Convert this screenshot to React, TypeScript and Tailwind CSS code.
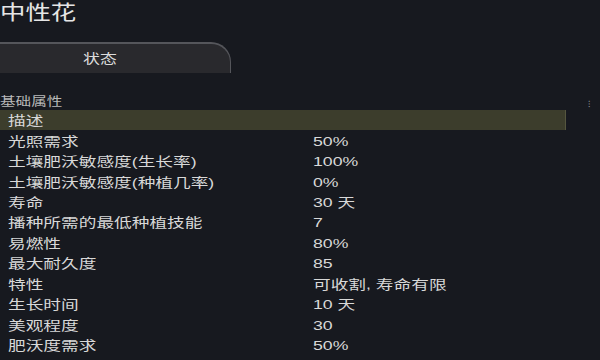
import React from 'react';

const rows: [string, string][] = [
  ['描述', ''],
  ['光照需求', '50%'],
  ['土壤肥沃敏感度(生长率)', '100%'],
  ['土壤肥沃敏感度(种植几率)', '0%'],
  ['寿命', '30 天'],
  ['播种所需的最低种植技能', '7'],
  ['易燃性', '80%'],
  ['最大耐久度', '85'],
  ['特性', '可收割, 寿命有限'],
  ['生长时间', '10 天'],
  ['美观程度', '30'],
  ['肥沃度需求', '50%'],
];

const font = { fontFamily: '"Liberation Sans", "Noto Sans CJK SC", sans-serif' };

export default function App() {
  return (
    <div className="w-[600px] h-[360px] overflow-hidden bg-[#17191f] text-[#d4d4d4]" style={font}>
      {/* title */}
      <div className="h-[40px] pt-[1px]">
        <span className="inline-block origin-left scale-x-[1.27] text-[20px] leading-[24px] text-[#e6e6e6]">中性花</span>
      </div>

      {/* tab */}
      <div className="w-[231px] h-[31px] mt-[2px] bg-[#29292d] border-t-2 border-r border-[#55565b] rounded-tr-[20px] flex items-center pl-[83px]">
        <span className="inline-block origin-left scale-x-[1.3] text-[13px] text-[#dcdcdc]">状态</span>
      </div>

      {/* section */}
      <div className="mt-[22px] flex">
        <div className="w-[566px]">
          <div className="h-[12px] leading-[12px]">
            <span className="inline-block origin-left scale-x-[1.3] text-[12px] text-[#b8b8b8]">基础属性</span>
          </div>
          <div className="mt-[3px]">
            {rows.map(([k, v], i) => (
              <div
                key={k}
                className={`h-[20.45px] flex items-center ${i === 0 ? 'bg-[#3c3d2c] border-r border-[#55563f]' : ''}`}
              >
                <div className="w-[313px] pl-[8px]">
                  <span className="inline-block origin-left scale-x-[1.36] text-[13px] leading-[16px] whitespace-nowrap text-[#d8d8d8]">{k}</span>
                </div>
                <div>
                  <span className="inline-block origin-left scale-x-[1.36] text-[13px] leading-[16px] whitespace-nowrap text-[#d8d8d8]">{v}</span>
                </div>
              </div>
            ))}
          </div>
        </div>
        <div className="ml-[22px] mt-[4px] w-[6px] h-[10px] text-[9px] leading-[10px] text-[#8a8c92]">⁝</div>
      </div>
    </div>
  );
}
